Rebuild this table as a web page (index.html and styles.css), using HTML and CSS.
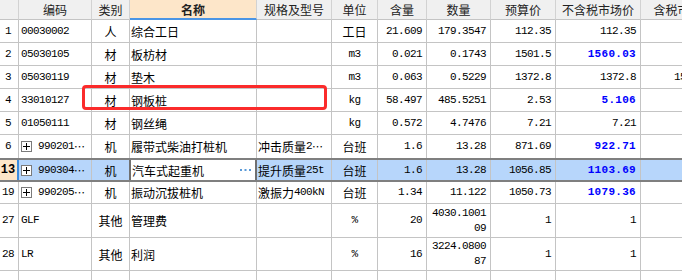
FILE: index.html
```html
<!DOCTYPE html>
<html lang="zh">
<head>
<meta charset="utf-8">
<link rel="stylesheet" href="styles.css">
</head>
<body>
<div class="sheet">
  <div class="row head">
    <div class="c rn"></div>
    <div class="c">编码</div>
    <div class="c">类别</div>
    <div class="c sel">名称</div>
    <div class="c">规格及型号</div>
    <div class="c">单位</div>
    <div class="c">含量</div>
    <div class="c">数量</div>
    <div class="c">预算价</div>
    <div class="c">不含税市场价</div>
    <div class="c">含税市场价</div>
  </div>

  <div class="row">
    <div class="c rn n">1</div>
    <div class="c code"><span class="n">00030002</span></div>
    <div class="c ctr">人</div>
    <div class="c name">综合工日</div>
    <div class="c spec"></div>
    <div class="c ctr">工日</div>
    <div class="c num">21.609</div>
    <div class="c num">179.3547</div>
    <div class="c num">112.35</div>
    <div class="c num">112.35</div>
    <div class="c num"></div>
  </div>

  <div class="row">
    <div class="c rn n">2</div>
    <div class="c code"><span class="n">05030105</span></div>
    <div class="c ctr">材</div>
    <div class="c name">板枋材</div>
    <div class="c spec"></div>
    <div class="c ctr n">m3</div>
    <div class="c num">0.021</div>
    <div class="c num">0.1743</div>
    <div class="c num">1501.5</div>
    <div class="c num hi">1560.03</div>
    <div class="c num"></div>
  </div>

  <div class="row">
    <div class="c rn n">3</div>
    <div class="c code"><span class="n">05030119</span></div>
    <div class="c ctr">材</div>
    <div class="c name">垫木</div>
    <div class="c spec"></div>
    <div class="c ctr n">m3</div>
    <div class="c num">0.063</div>
    <div class="c num">0.5229</div>
    <div class="c num">1372.8</div>
    <div class="c num">1372.8</div>
    <div class="c num">1551.264</div>
  </div>

  <div class="row">
    <div class="c rn n">4</div>
    <div class="c code"><span class="n">33010127</span></div>
    <div class="c ctr">材</div>
    <div class="c name">钢板桩</div>
    <div class="c spec"></div>
    <div class="c ctr n">kg</div>
    <div class="c num">58.497</div>
    <div class="c num">485.5251</div>
    <div class="c num">2.53</div>
    <div class="c num hi">5.106</div>
    <div class="c num"></div>
  </div>

  <div class="row">
    <div class="c rn n">5</div>
    <div class="c code"><span class="n">01050111</span></div>
    <div class="c ctr">材</div>
    <div class="c name">钢丝绳</div>
    <div class="c spec"></div>
    <div class="c ctr n">kg</div>
    <div class="c num">0.572</div>
    <div class="c num">4.7476</div>
    <div class="c num">7.21</div>
    <div class="c num">7.21</div>
    <div class="c num"></div>
  </div>

  <div class="row pre">
    <div class="c rn n">6</div>
    <div class="c code"><span class="exp"><svg width="7" height="7" viewBox="0 0 7 7"><path d="M0 3.5H7M3.5 0V7" stroke="#000" stroke-width="1"/></svg></span><span class="n">990201</span><span class="dots">⋯</span></div>
    <div class="c ctr">机</div>
    <div class="c name">履带式柴油打桩机</div>
    <div class="c spec">冲击质量<span class="n">2</span><span class="dots">⋯</span></div>
    <div class="c ctr">台班</div>
    <div class="c num">1.6</div>
    <div class="c num">13.28</div>
    <div class="c num">871.69</div>
    <div class="c num hi">922.71</div>
    <div class="c num"></div>
  </div>

  <div class="row cur">
    <div class="c rn n">13</div>
    <div class="c code"><span class="exp"><svg width="7" height="7" viewBox="0 0 7 7"><path d="M0 3.5H7M3.5 0V7" stroke="#000" stroke-width="1"/></svg></span><span class="n">990304</span><span class="dots">⋯</span></div>
    <div class="c ctr kind">机</div>
    <div class="c name edit">汽车式起重机<svg class="more" width="11" height="2" viewBox="0 0 11 2"><rect x="0" y="0" width="2" height="2" fill="#5a9ad8"/><rect x="4.5" y="0" width="2" height="2" fill="#5a9ad8"/><rect x="9" y="0" width="2" height="2" fill="#5a9ad8"/></svg></div>
    <div class="c spec">提升质量<span class="n">25t</span></div>
    <div class="c ctr">台班</div>
    <div class="c num">1.6</div>
    <div class="c num">13.28</div>
    <div class="c num">1056.85</div>
    <div class="c num hi">1103.69</div>
    <div class="c num"></div>
  </div>

  <div class="row r19">
    <div class="c rn n">19</div>
    <div class="c code"><span class="exp"><svg width="7" height="7" viewBox="0 0 7 7"><path d="M0 3.5H7M3.5 0V7" stroke="#000" stroke-width="1"/></svg></span><span class="n">990205</span><span class="dots">⋯</span></div>
    <div class="c ctr">机</div>
    <div class="c name">振动沉拔桩机</div>
    <div class="c spec">激振力<span class="n">400kN</span></div>
    <div class="c ctr">台班</div>
    <div class="c num">1.34</div>
    <div class="c num">11.122</div>
    <div class="c num">1050.73</div>
    <div class="c num hi">1079.36</div>
    <div class="c num"></div>
  </div>

  <div class="row tall">
    <div class="c rn n">27</div>
    <div class="c code"><span class="n">GLF</span></div>
    <div class="c ctr">其他</div>
    <div class="c name">管理费</div>
    <div class="c spec"></div>
    <div class="c ctr n">%</div>
    <div class="c num">20</div>
    <div class="c num wrap">4030.100109</div>
    <div class="c num">1</div>
    <div class="c num">1</div>
    <div class="c num"></div>
  </div>

  <div class="row tall last">
    <div class="c rn n">28</div>
    <div class="c code"><span class="n">LR</span></div>
    <div class="c ctr">其他</div>
    <div class="c name">利润</div>
    <div class="c spec"></div>
    <div class="c ctr n">%</div>
    <div class="c num">16</div>
    <div class="c num wrap">3224.080087</div>
    <div class="c num">1</div>
    <div class="c num">1</div>
    <div class="c num"></div>
  </div>

  <div class="row">
    <div class="c rn"></div>
    <div class="c"></div>
    <div class="c"></div>
    <div class="c"></div>
    <div class="c"></div>
    <div class="c"></div>
    <div class="c"></div>
    <div class="c"></div>
    <div class="c"></div>
    <div class="c"></div>
    <div class="c"></div>
  </div>

  <div class="mark"></div>
</div>
</body>
</html>
```

FILE: styles.css
```css
html, body {
  margin: 0;
  padding: 0;
  background: #fff;
  overflow: hidden;
}

.sheet {
  position: relative;
  width: 682px;
  height: 280px;
  overflow: hidden;
  font-family: "Noto Sans CJK SC", sans-serif;
  font-size: 12px;
  color: #000;
}

.row {
  display: grid;
  grid-template-columns: 19px 73px 38px 127px 75px 46px 49px 64px 65px 85px 86px;
  width: 727px;
  height: 23px;
  box-sizing: border-box;
  border-bottom: 1px solid #c4c4c4;
}

.c {
  box-sizing: border-box;
  border-right: 1px solid #c4c4c4;
  display: flex;
  align-items: center;
  overflow: hidden;
  white-space: nowrap;
  line-height: 15px;
}

.n, .num {
  font-family: "Liberation Mono", monospace;
  font-size: 11px;
  letter-spacing: -0.6px;
}

/* header */
.head {
  height: 20px;
  border-bottom: none;
  background: #f0f0f0;
}
.head .c {
  justify-content: center;
  border-right-color: #d2d2d2;
  border-bottom: 1px solid #c4c4c4;
  color: #222;
}
.head .sel {
  background: #fde6c9;
  font-weight: bold;
  border-bottom: 2px solid #4b95e5;
}

.rn {
  justify-content: center;
  padding-right: 2px;
}
.code {
  padding-left: 2px;
}
.ctr {
  justify-content: center;
}
.name {
  padding-left: 1px;
}
.spec {
  padding-left: 1px;
}
.num {
  justify-content: flex-end;
  text-align: right;
  padding-right: 4px;
  padding-left: 4px;
}
.hi {
  color: #0000ff;
  font-weight: bold;
  letter-spacing: 0.3px;
}
.wrap {
  white-space: normal;
  word-break: break-all;
}

.dots {
  font-family: "Noto Sans CJK SC", sans-serif;
  font-size: 11px;
  letter-spacing: -1px;
}

.exp {
  display: inline-flex;
  align-items: center;
  justify-content: center;
  width: 11px;
  height: 11px;
  box-sizing: border-box;
  border: 1px solid #7a7a7a;
  background: #fff;
  margin-right: 6px;
}

/* row 6: thick line under it */
.pre {
  height: 25px;
  border-bottom: 2px solid #7f7f7f;
}

/* current row */
.cur {
  height: 22px;
  background: #b7d6fb;
  border-bottom: 2px solid #7f7f7f;
}
.cur .rn {
  background: #fde6c9;
  font-weight: bold;
  border-right: 2px solid #3b8de0;
  letter-spacing: 0;
  font-size: 12px;
  padding-right: 1px;
}
.cur .kind {
  border-right-color: #707070;
}
.cur .edit {
  background: #fff;
  border-right: 2px solid #707070;
  box-shadow: inset 1px 0 #707070;
  padding-left: 2px;
  padding-right: 4px;
}
.more {
  margin-left: auto;
}

.r19 {
  height: 22px;
}

.tall {
  height: 34px;
}
.last {
  height: 33px;
}

.mark {
  position: absolute;
  left: 82px;
  top: 85px;
  width: 245px;
  height: 25px;
  box-sizing: border-box;
  border: 3px solid #fb2b2b;
  border-radius: 4px;
}
```
